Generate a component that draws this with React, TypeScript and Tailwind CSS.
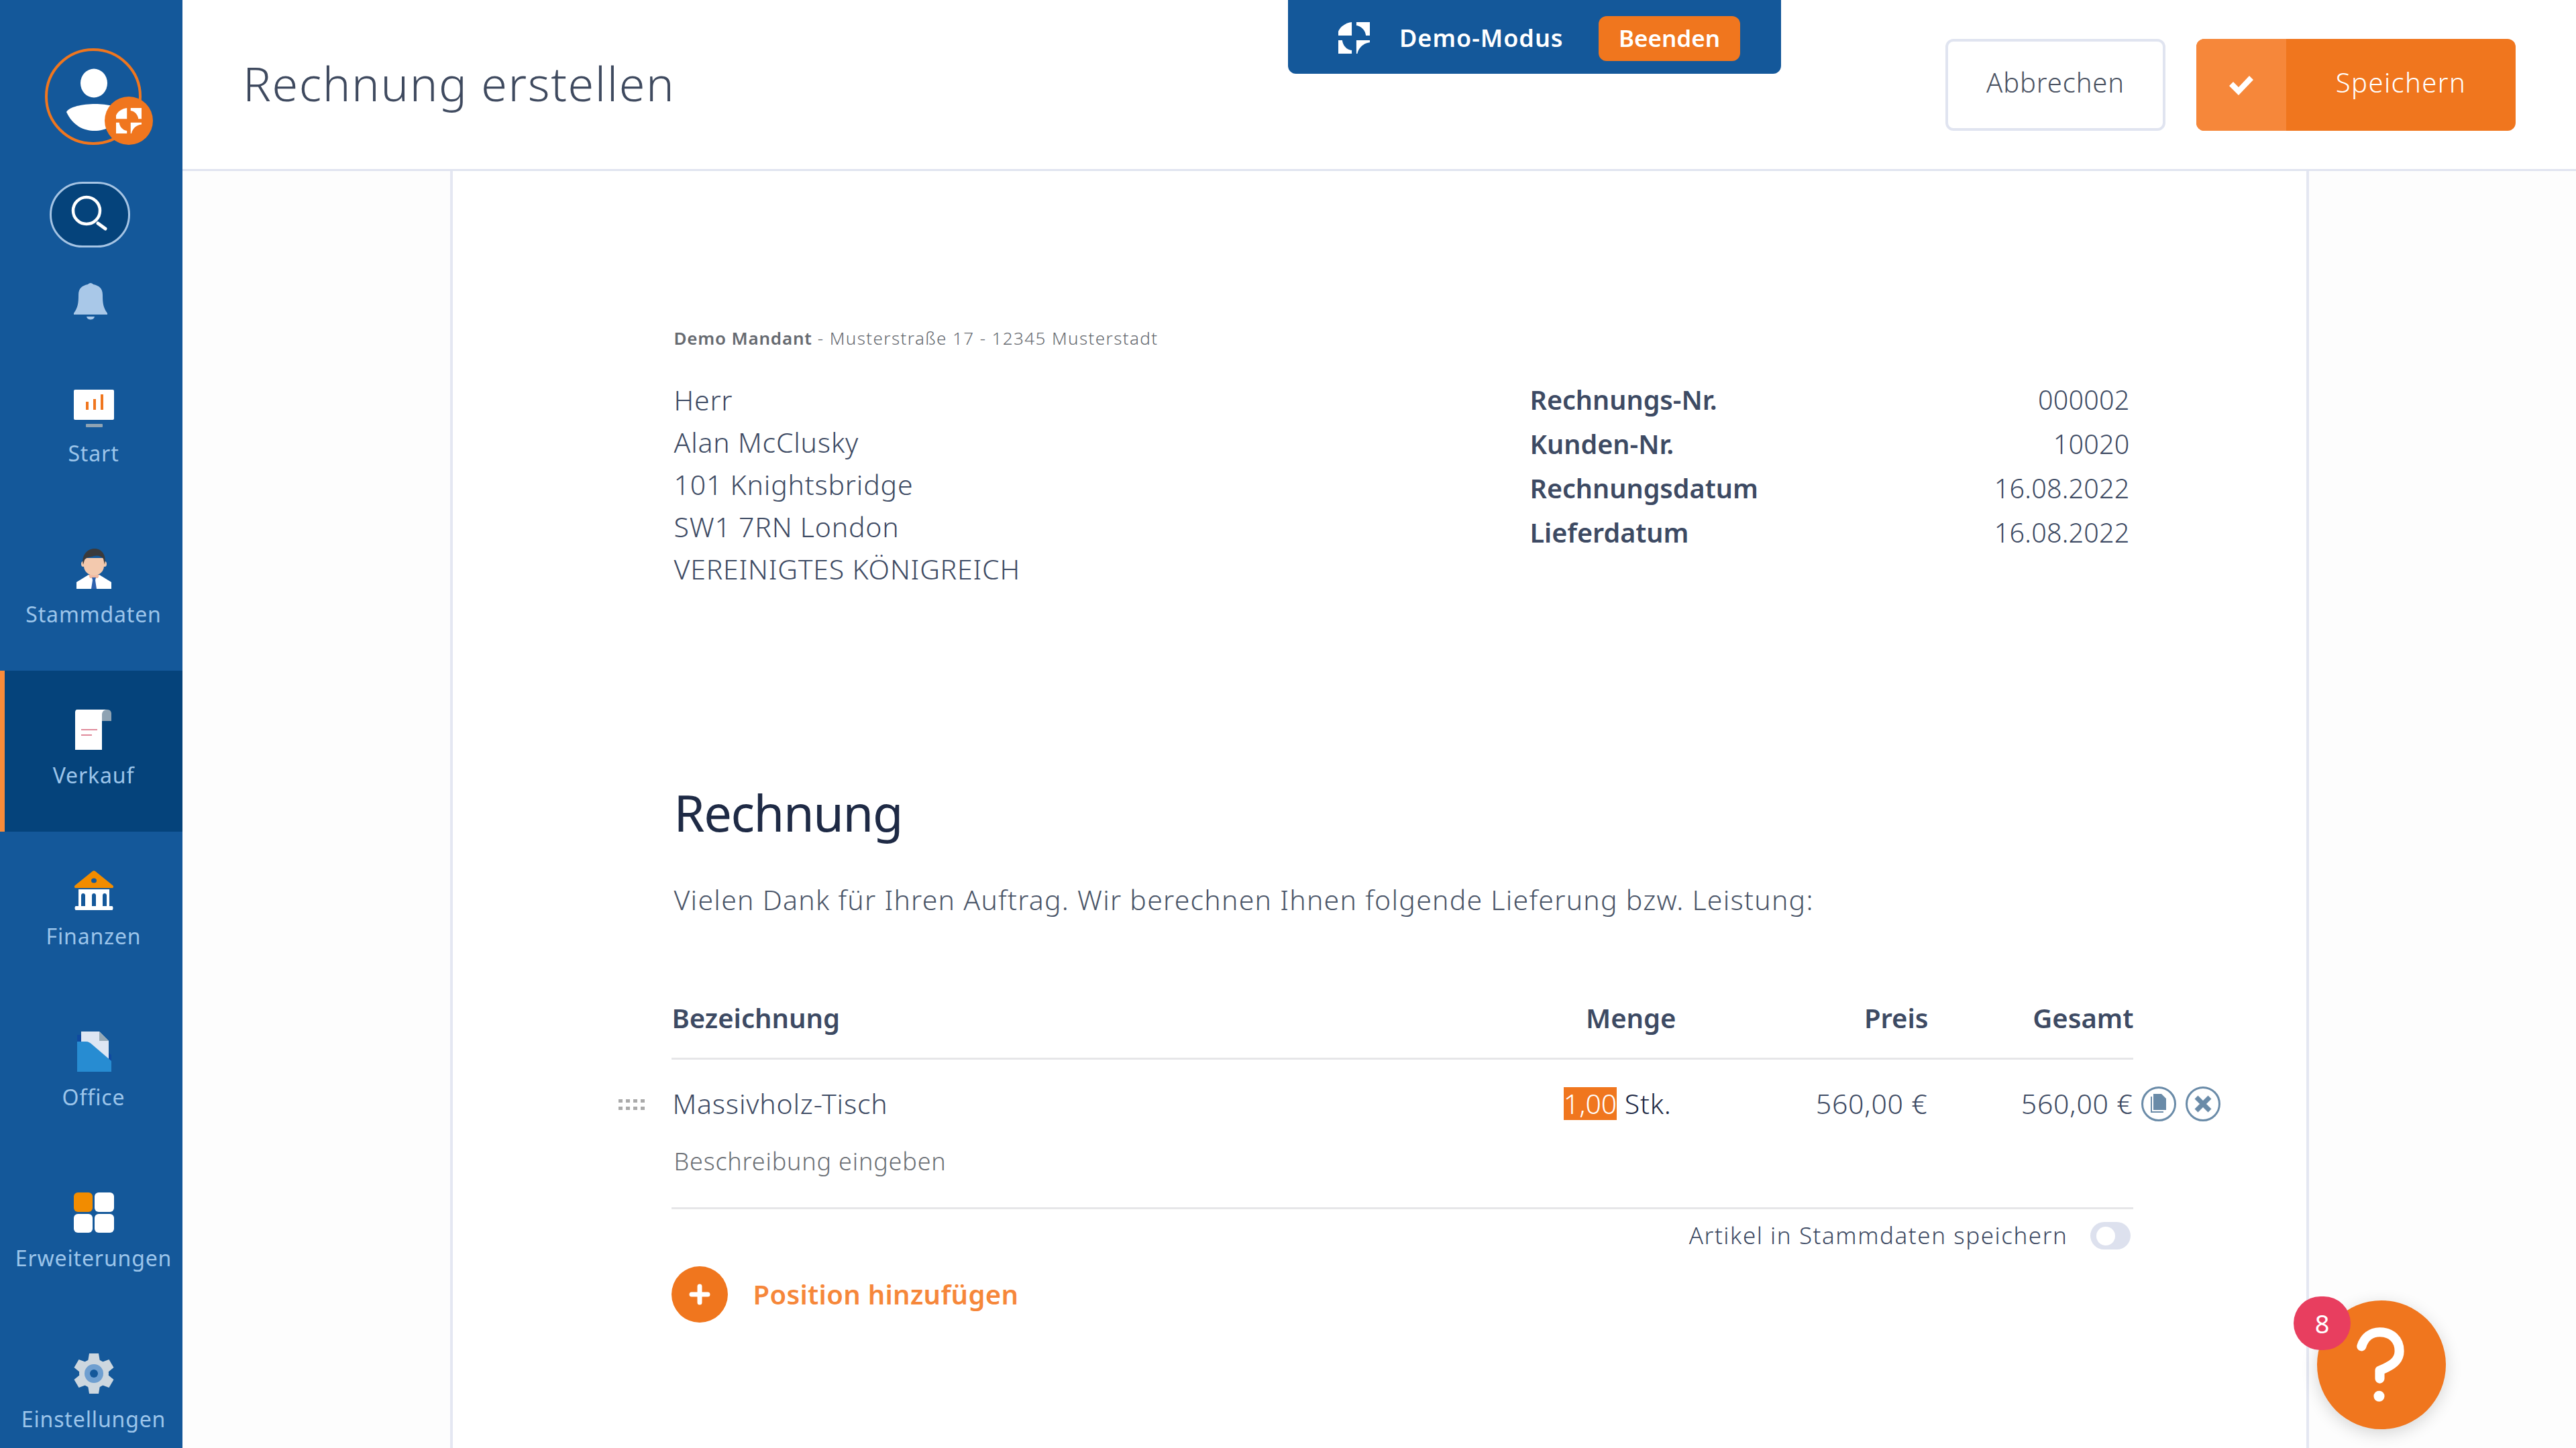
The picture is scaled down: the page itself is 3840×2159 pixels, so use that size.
import type { ReactNode } from "react";

const LogoMark = ({ className }: { className: string }) => (
  <svg className={className} viewBox="0 0 48 48" fill="currentColor">
    <path d="M20.5 0V20.5H0V14C3 7 11 1 20.5 0Z" />
    <path d="M27.5 0H48V20.5H42C41 12 35 6 27.5 5Z" />
    <path d="M0 27.5H6C7 36 13 42 20.5 43V48H0Z" />
    <path d="M27.5 27.5H48V31C38 32 31 39 29 48H27.5Z" />
  </svg>
);

const StartIcon = () => (
  <svg className="h-[60px] w-[60px]" viewBox="0 0 60 60">
    <rect x="0" y="3" width="60" height="45" rx="2" fill="#fff" />
    <rect x="18" y="54" width="25" height="5" rx="1" fill="#8fa3b3" />
    <path d="M18 21h4v12h-4zM29 17h4v16h-4zM40 10h4v23h-4z" fill="#f0761e" />
  </svg>
);

const PersonIcon = () => (
  <svg className="h-[60px] w-[60px]" viewBox="0 0 60 60">
    <path d="M4 60V50L22 39H38L56 50V60Z" fill="#fff" />
    <path d="M22 39H38L36 44H24Z" fill="#f2b9a0" />
    <path d="M27 43H33L32 47L34 60H26L28 47Z" fill="#2f62ae" />
    <ellipse cx="14" cy="23" rx="3" ry="4" fill="#f3c9ae" />
    <ellipse cx="46" cy="23" rx="3" ry="4" fill="#f3c9ae" />
    <path d="M15 14H45V26C45 34 38 40 30 40C22 40 15 34 15 26Z" fill="#f3c9ae" />
    <path d="M14 24C11 10 20 0 31 0C42 0 49 10 46 24L44 15C40 10 34 10 30 11C24 13 18 13 16 17Z" fill="#3a3a3c" />
  </svg>
);

const SalesIcon = () => (
  <svg className="h-[60px] w-[60px]" viewBox="0 0 60 60">
    <path d="M42 0H50C54 0 56 3 56 6V17H42Z" fill="#8fa3b3" />
    <path d="M5 0H50C44 0 42 4 42 8V60H2V4C2 2 3 0 5 0Z" fill="#fff" />
    <path d="M11 29H35V31H11zM11 37H27V39H11z" fill="#e08a9a" />
  </svg>
);

const BankIcon = () => (
  <svg className="h-[60px] w-[60px]" viewBox="0 0 60 60">
    <path d="M28 1C29 0 31 0 32 1L58 22C60 24 59 26 57 26H3C1 26 0 24 2 22Z" fill="#f28c00" />
    <ellipse cx="30" cy="15" rx="4" ry="3.5" fill="#14589a" />
    <path d="M7 28H53V53H57C59 53 59 59 57 59H3C1 59 1 53 3 53H7Z" fill="#fff" />
    <path d="M11 53V37C11 33 17 33 17 37V53ZM27 53V37C27 33 33 33 33 37V53ZM43 53V37C43 33 49 33 49 37V53Z" fill="#14589a" />
  </svg>
);

const OfficeIcon = () => (
  <svg className="h-[60px] w-[60px]" viewBox="0 0 60 60">
    <path d="M5 5H12V16H5ZM52 32L56 35V50H52Z" fill="#0f4aa0" />
    <path d="M11 0H38L52 14V45L11 16Z" fill="#dde6f3" />
    <path d="M38 0L52 14H38Z" fill="#95a9b6" />
    <path d="M5 15H18C22 15 25 17 28 20L56 44V60H5Z" fill="#278cd2" />
  </svg>
);

const GridIcon = () => (
  <div className="grid h-[60px] w-[60px] grid-cols-2 gap-[3px]">
    <span className="rounded-[6px] bg-[#f28c00]" />
    <span className="rounded-[6px] bg-white" />
    <span className="rounded-[6px] bg-white" />
    <span className="rounded-[6px] bg-white" />
  </div>
);

const GearIcon = () => (
  <svg className="h-[60px] w-[60px]" viewBox="0 0 60 60">
    {[0, 60, 120, 180, 240, 300].map((angle) => (
      <path key={angle} d="M23 0H37L39 12H21Z" fill="#cdd7df" transform={`rotate(${angle} 30 30)`} />
    ))}
    <circle cx="30" cy="30" r="22" fill="#cdd7df" />
    <circle cx="30" cy="30" r="14" fill="#6f9fd0" />
    <circle cx="30" cy="30" r="6" fill="#14589a" />
  </svg>
);

function NavItem({ label, icon, active }: { label: string; icon: ReactNode; active?: boolean }) {
  return (
    <div
      className={`flex h-[240px] shrink-0 flex-col items-center pt-[58px] ${
        active ? "border-l-[7px] border-[#f98b3a] bg-[#05437b]" : "pl-[7px]"
      }`}
    >
      <div className="h-[60px]">{icon}</div>
      <span className="mt-[14px] text-[32px] leading-[48px] tracking-[0.85px] text-[#9cc5ea]">{label}</span>
    </div>
  );
}

function Sidebar() {
  return (
    <aside className="flex h-full w-[272px] shrink-0 flex-col overflow-hidden bg-[#14589a]">
      <div className="h-[520px] shrink-0 pt-[72px]">
        <div className="relative ml-[67px] h-[144px] w-[144px] rounded-full border-[4px] border-[#f0761e]">
          <svg className="absolute left-[26px] top-[26px] h-[94px] w-[88px]" viewBox="0 0 88 94">
            <ellipse cx="43" cy="22" rx="20" ry="21.5" fill="#fff" />
            <path d="M2 65C10 50 76 48 86 65C76 86 60 93 44 93C28 93 12 86 2 65Z" fill="#fff" />
          </svg>
          <div className="absolute left-[85px] top-[68px] flex h-[72px] w-[72px] items-center justify-center rounded-full bg-[#f0761e] text-white">
            <LogoMark className="h-[38px] w-[38px]" />
          </div>
        </div>
        <div className="ml-[74px] mt-[55px] flex h-[98px] w-[120px] items-center justify-center rounded-full border-[3px] border-[#a5c4e4] bg-[#05437b]">
          <svg className="h-[58px] w-[58px]" viewBox="0 0 58 58" fill="none" stroke="#fff">
            <circle cx="24" cy="23" r="20" strokeWidth="4.5" />
            <path d="M41 42L52 50" strokeWidth="5" strokeLinecap="round" />
          </svg>
        </div>
        <svg className="ml-[110px] mt-[53px] h-[56px] w-[50px]" viewBox="0 0 50 56" fill="#a9c8e8">
          <path d="M25 0C27 0 28 1 29 2C38 4 43 8 43 18C43 30 44 37 50 45V47H0V45C6 37 7 30 7 18C7 8 12 4 21 2C22 1 23 0 25 0Z" />
          <path d="M19 50H31C30 56 20 56 19 50Z" />
        </svg>
      </div>
      <NavItem label="Start" icon={<StartIcon />} />
      <NavItem label="Stammdaten" icon={<PersonIcon />} />
      <NavItem label="Verkauf" icon={<SalesIcon />} active />
      <NavItem label="Finanzen" icon={<BankIcon />} />
      <NavItem label="Office" icon={<OfficeIcon />} />
      <NavItem label="Erweiterungen" icon={<GridIcon />} />
      <NavItem label="Einstellungen" icon={<GearIcon />} />
    </aside>
  );
}

function Header() {
  return (
    <header className="relative flex h-[255px] shrink-0 items-start justify-between border-b-[3px] border-[#e0e4f0] bg-white pl-[90px] pr-[90px]">
      <h1 className="mt-[76px] text-[70px] font-light leading-[96px] tracking-[1.6px] text-[#3f4a5f]">Rechnung erstellen</h1>
      <div className="absolute left-[1648px] top-0 flex h-[110px] w-[735px] items-start rounded-b-[12px] bg-[#14589a] pl-[75px] text-white">
        <LogoMark className="mt-[33px] h-[47px] w-[47px]" />
        <span className="ml-[44px] mt-[28px] text-[36px] font-semibold leading-[58px] tracking-[1px]">Demo-Modus</span>
        <span className="absolute left-[463px] top-[24px] flex h-[67px] w-[211px] items-center justify-center rounded-[12px] bg-[#f0761e] text-[35px] font-semibold">
          Beenden
        </span>
      </div>
      <div className="mt-[58px] flex gap-[46px]">
        <button className="h-[137px] w-[328px] rounded-[12px] border-[4px] border-[#e0e4f0] bg-white pb-[8px] text-[40px] font-light tracking-[0.9px] text-[#4b5363]" type="button">
          Abbrechen
        </button>
        <button className="flex h-[137px] w-[476px] overflow-hidden rounded-[12px] bg-[#f0761e] text-white" type="button">
          <span className="flex h-full w-[134px] items-center justify-center bg-[#f6873a]">
            <svg className="h-[40px] w-[40px]" viewBox="0 0 40 40" fill="#fff">
              <path d="M2 21L8 15L16 23L32 6L38 12L16 35Z" />
            </svg>
          </span>
          <span className="flex-1 text-center text-[40px] font-light leading-[129px] tracking-[1.4px]">Speichern</span>
        </button>
      </div>
    </header>
  );
}

const addressLines = ["Herr", "Alan McClusky", "101 Knightsbridge", "SW1 7RN London", "VEREINIGTES KÖNIGREICH"];
const invoiceMeta = [
  ["Rechnungs-Nr.", "000002"],
  ["Kunden-Nr.", "10020"],
  ["Rechnungsdatum", "16.08.2022"],
  ["Lieferdatum", "16.08.2022"],
];

function RoundIcon({ children }: { children: ReactNode }) {
  return (
    <span className="flex h-[52px] w-[52px] items-center justify-center rounded-full border-[3px] border-[#6a8ba8]">{children}</span>
  );
}

function Paper() {
  return (
    <main className="mx-auto h-full w-[2771px] border-x-[4px] border-[#e4e7f2] bg-white pl-[326px] pt-[229px]">
      <p className="pl-[4px] text-[26px] leading-[40px] text-[#666a70]">
        <span className="font-semibold tracking-[0.8px]">Demo Mandant</span>
        <span className="font-light tracking-[1.4px]"> - Musterstraße 17 - 12345 Musterstadt</span>
      </p>

      <div className="mt-[41px] flex pl-[4px] text-[#3d4a63]">
        <div className="w-[1276px] text-[41px] font-light leading-[63px] tracking-[0.8px]">
          {addressLines.map((line) => (
            <div key={line}>{line}</div>
          ))}
        </div>
        <div className="-mt-[2px] w-[894px] text-[39.5px] leading-[66px]">
          {invoiceMeta.map(([label, value]) => (
            <div className="flex justify-between" key={label}>
              <span className="font-semibold">{label}</span>
              <span className="font-light tracking-[0.2px]">{value}</span>
            </div>
          ))}
        </div>
      </div>

      <h2 className="mt-[282px] pl-[4px] text-[74px] font-normal leading-[100px] tracking-[-1.4px] text-[#1e2a45]">Rechnung</h2>
      <p className="mt-[49px] pl-[4px] text-[41px] font-light leading-[60px] tracking-[1.26px] text-[#4a5568]">
        Vielen Dank für Ihren Auftrag. Wir berechnen Ihnen folgende Lieferung bzw. Leistung:
      </p>

      <div className="mt-[117px] w-[2179px] text-[#3d4a63]">
        <div className="grid h-[92px] grid-cols-[1202px_295px_376px_306px] border-b-[3px] border-[#e6e6e8] pl-[1px] text-[40px] font-semibold leading-[60px]">
          <span>Bezeichnung</span>
          <span className="text-right">Menge</span>
          <span className="text-right">Preis</span>
          <span className="text-right">Gesamt</span>
        </div>

        <div className="-ml-[79px] mt-[35px] grid grid-cols-[79px_1200px_291px_382px_306px_132px] items-center text-[41px] font-light leading-[60px] tracking-[0.8px]">
          <span className="mt-[4px] grid h-[16px] w-[39px] grid-cols-4 gap-x-[5px] gap-y-[5px]">
            {Array.from({ length: 8 }).map((_, dot) => (
              <i className="h-[5px] w-[6px] bg-[#aaaaaa]" key={dot} />
            ))}
          </span>
          <span className="pl-[2px]">Massivholz-Tisch</span>
          <span className="whitespace-nowrap text-right text-[#1e2a45]">
            <span className="inline-block bg-[#f0761e] leading-[49px] tracking-[0px] text-white">1,00</span> Stk.
          </span>
          <span className="whitespace-nowrap text-right">560,00 €</span>
          <span className="whitespace-nowrap text-right">560,00 €</span>
          <span className="mt-[2px] flex justify-end gap-[14px] pr-[2px]">
            <RoundIcon>
              <svg className="h-[30px] w-[26px]" viewBox="0 0 26 30" fill="#6a8ba8">
                <path d="M1 4H3V26H20V28H1Z" />
                <path d="M5 0H17L24 7V24H5Z" />
              </svg>
            </RoundIcon>
            <RoundIcon>
              <svg className="h-[26px] w-[26px]" viewBox="0 0 26 26" stroke="#6a8ba8" strokeWidth="7">
                <path d="M3 3L23 23M23 3L3 23" />
              </svg>
            </RoundIcon>
          </span>
        </div>

        <p className="mt-[32px] pl-[4px] text-[36px] font-light leading-[50px] tracking-[0.8px] text-[#6b6f75]">Beschreibung eingeben</p>
        <div className="mt-[43px] h-[3px] bg-[#e6e6e8]" />

        <div className="mt-[19px] flex h-[41px] items-center justify-end pr-[4px]">
          <span className="text-[35px] font-light tracking-[1.55px]">Artikel in Stammdaten speichern</span>
          <span className="ml-[33px] flex h-[41px] w-[60px] items-center rounded-full bg-[#dde1ee] pl-[9px]">
            <i className="h-[28px] w-[28px] rounded-full bg-white" />
          </span>
        </div>

        <div className="mt-[25px] flex items-center">
          <span className="flex h-[84px] w-[84px] items-center justify-center rounded-full bg-[#f0761e]">
            <svg className="h-[32px] w-[32px]" viewBox="0 0 32 32" stroke="#fff" strokeWidth="7" strokeLinecap="round">
              <path d="M16 4V28M4 16H28" />
            </svg>
          </span>
          <span className="ml-[38px] text-[40px] font-semibold tracking-[0.3px] text-[#f6873a]">Position hinzufügen</span>
        </div>
      </div>
    </main>
  );
}

export default function App() {
  return (
    <div className="relative flex h-[2159px] w-[3840px] overflow-hidden bg-white font-['Noto_Sans',sans-serif]">
      <Sidebar />
      <div className="flex min-w-0 flex-1 flex-col">
        <Header />
        <div className="min-h-0 flex-1 bg-[#fdfdfd]">
          <Paper />
        </div>
      </div>
      <div className="absolute left-[3454px] top-[1939px] h-[192px] w-[192px] rounded-full bg-[#f0761e] shadow-[0_6px_24px_rgba(0,0,0,0.16)]">
        <svg className="h-full w-full" viewBox="0 0 191 191" fill="none">
          <path d="M66 68C70 55 80 47 93 47C110 47 122 58 122 75C122 90 110 97 93 104V116" stroke="#fff" strokeWidth="14" strokeLinecap="round" strokeLinejoin="round" />
          <circle cx="92" cy="142" r="8" fill="#fff" />
        </svg>
      </div>
      <div className="absolute left-[3419px] top-[1933px] flex h-[80px] w-[85px] items-center justify-center rounded-full bg-[#e83e5f] text-[38px] text-white">
        8
      </div>
    </div>
  );
}
